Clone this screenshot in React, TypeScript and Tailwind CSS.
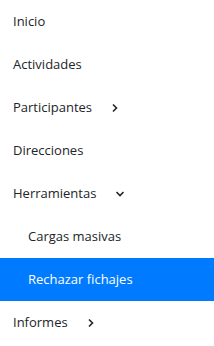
import React from 'react';

type Item = { label: string; sub?: boolean; active?: boolean; chevron?: 'right' | 'down' };

const items: Item[] = [
  { label: 'Inicio' },
  { label: 'Actividades' },
  { label: 'Participantes', chevron: 'right' },
  { label: 'Direcciones' },
  { label: 'Herramientas', chevron: 'down' },
  { label: 'Cargas masivas', sub: true },
  { label: 'Rechazar fichajes', sub: true, active: true },
  { label: 'Informes', chevron: 'right' },
];

const Chevron = ({ dir }: { dir: 'right' | 'down' }) =>
  dir === 'right' ? (
    <svg width="8" height="10" viewBox="0 0 8 10" className="ml-[19px]" fill="none" stroke="currentColor" strokeWidth="1.6">
      <path d="M2 1.5 L5.5 5 L2 8.5" />
    </svg>
  ) : (
    <svg width="10" height="8" viewBox="0 0 10 8" className="ml-[19px]" fill="none" stroke="currentColor" strokeWidth="1.6">
      <path d="M1.5 2 L5 5.5 L8.5 2" />
    </svg>
  );

export default function App() {
  return (
    <nav className="w-[214px] bg-white font-['Open_Sans',sans-serif] text-[13px]">
      {items.map((item) => (
        <div
          key={item.label}
          className={`flex h-[43px] items-center ${item.sub ? 'pl-[28px]' : 'pl-[13px]'} ${
            item.active ? 'bg-[#007bff] text-white' : 'text-[#212529]'
          }`}
        >
          <span>{item.label}</span>
          {item.chevron && <Chevron dir={item.chevron} />}
        </div>
      ))}
    </nav>
  );
}
